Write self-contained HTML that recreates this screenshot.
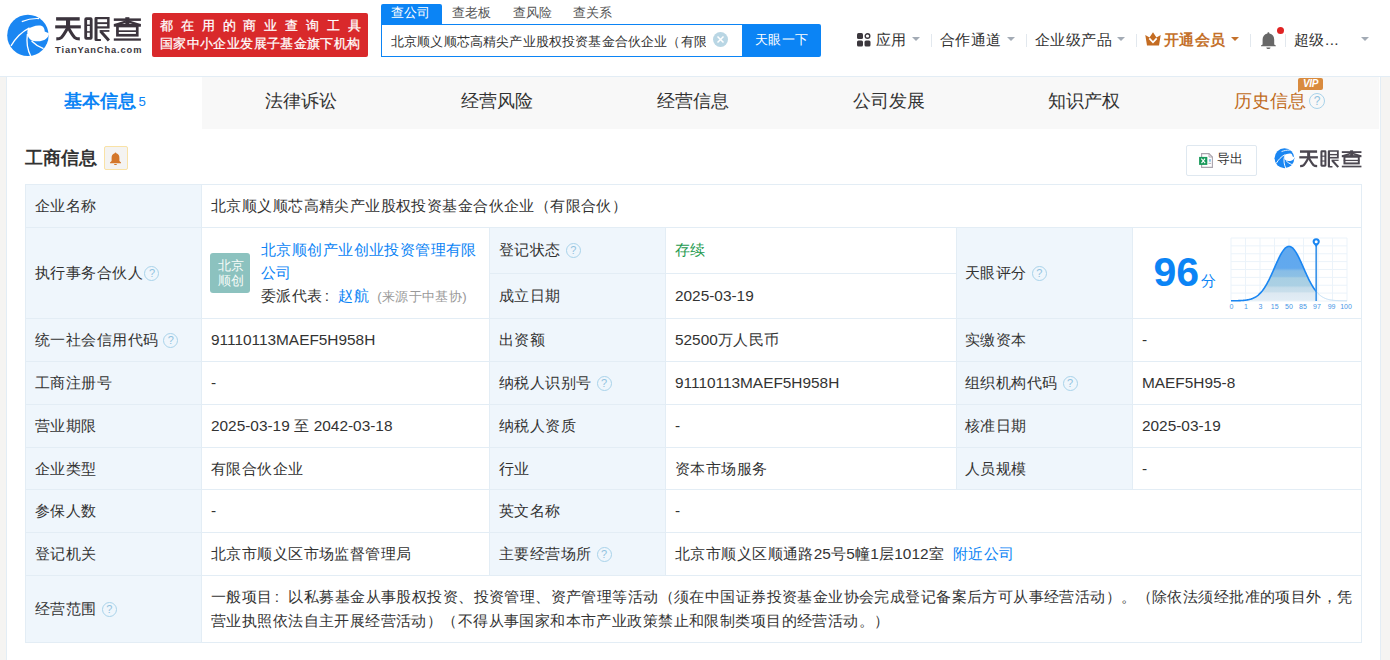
<!DOCTYPE html>
<html><head><meta charset="utf-8">
<style>
*{margin:0;padding:0;box-sizing:border-box}
html,body{width:1390px;height:660px;overflow:hidden}
body{position:relative;background:#f5f4f2;font-family:"Liberation Sans",sans-serif;color:#333}
.a{position:absolute;white-space:nowrap}
#hdr{position:absolute;left:0;top:0;width:1390px;height:76px;background:#fff}
#hline{position:absolute;left:0;top:76px;width:1390px;height:1px;background:#e3edf5}
#card{position:absolute;left:6px;top:76px;width:1375px;height:600px;background:#fff;border:1px solid #e3edf5}
#rstrip{position:absolute;left:1381px;top:77px;width:9px;height:600px;background:#f5f4f2}
.tabbg{position:absolute;top:77px;height:52px;background:#f8f8f8}
.tab{position:absolute;top:88px;font-size:17.6px;line-height:26px;color:#333;text-align:center}
.bd{position:absolute;background:#e3edf5}
.lbl{position:absolute;background:#eff6fc}
.t{position:absolute;font-size:15.4px;line-height:20px;white-space:nowrap;color:#333}
.q{display:inline-block;width:15px;height:15px;border:1px solid #a9d3ea;border-radius:50%;color:#92c3df;font-size:11px;line-height:13px;text-align:center;vertical-align:1px;margin-left:5px;font-family:"Liberation Sans",sans-serif}
.caret{position:absolute;width:0;height:0;border-left:4px solid transparent;border-right:4px solid transparent;border-top:4.5px solid #a3abb5}
.sep{position:absolute;top:34px;width:1px;height:13px;background:#e2e8ee}
.nav{position:absolute;top:30px;font-size:15.4px;line-height:20px;color:#333;white-space:nowrap;letter-spacing:0.45px}
</style><style>.c{letter-spacing:0.42px}</style></head><body>
<div id="hdr"></div>
<div id="hline"></div>
<div id="card"></div>
<div id="rstrip"></div>

<!-- logo -->
<svg class="a" style="left:4px;top:12px" width="48" height="48" viewBox="0 0 48 48">
<circle cx="23.9" cy="23.4" r="20.7" fill="#1a86f2"/>
<path d="M24 17.1 C27 15 33 12.5 38 14 C40 15 40.8 17.5 40.7 19.5 L44.8 21.3 L45 22 C44.2 26 41 28.5 36 29.2 C32 29.5 29 29 27.6 28.4 C25 27 23.3 24 23.3 21 C23.3 19.5 23.5 18 24 17.1Z" fill="#fff"/>
<path d="M17.8 9.6 C23 7.5 29 6.2 35 6.6" stroke="#fff" stroke-width="1.2" fill="none"/>
<path d="M7 33.8 C11 27 17 20 25.5 15.8" stroke="#fff" stroke-width="1.3" fill="none"/>
<path d="M23.4 22 C22.4 29 23 37 26.9 44.5" stroke="#fff" stroke-width="1.3" fill="none"/>
<path d="M27.6 29 C30 31.5 34 34.5 39.5 36.6" stroke="#fff" stroke-width="1.3" fill="none"/>
</svg>
<svg class="a" style="left:52px;top:14px" width="96.00" height="30.00" viewBox="0 0 96 30"><g fill="#3b343d">
<rect x="4.1" y="3.2" width="23.6" height="3.4"/>
<rect x="3.2" y="11.3" width="25.6" height="3.1"/>
<rect x="14" y="5" width="4.1" height="8"/>
<rect x="33.7" y="4.6" width="5.5" height="19.8" rx="0.6" fill="none" stroke="#3b343d" stroke-width="2.8"/>
<rect x="33" y="10.5" width="7" height="1.5"/>
<rect x="33" y="17.2" width="7" height="1.5"/>
<path d="M42.5 4.5Q42.5 3.1 44 3.1H57.6V14.6H45.5V24.6Q45.5 24.9 45.8 24.9H48.9V26.9H44Q42.5 26.9 42.5 25.4Z"/>
<rect x="45.5" y="5.2" width="9.6" height="3" fill="#fff"/>
<rect x="45.5" y="10.1" width="9.6" height="2.2" fill="#fff"/>
<rect x="47.6" y="16.1" width="9.8" height="1.7"/>
<rect x="61.8" y="4.4" width="27.1" height="2.5"/>
<rect x="73.3" y="3.2" width="4.1" height="8.5"/>
<rect x="61.8" y="9.9" width="27.1" height="2.8"/>
<rect x="65.45" y="12" width="19.8" height="9.25" fill="none" stroke="#3b343d" stroke-width="2.7"/>
<rect x="64.5" y="16.3" width="21.5" height="1.7"/>
<rect x="61.8" y="24.4" width="27.1" height="2.3"/>
</g>
<g fill="none" stroke="#3b343d" stroke-linejoin="round">
<path d="M15.9 13.5C14 17 11.5 21.5 9.3 23.6C8.3 24.5 7 24.9 4.3 24.9" stroke-width="3.1"/>
<path d="M16.2 13.5C18.1 17 20.6 21.5 22.8 23.6C23.8 24.5 25.1 24.9 27.8 24.9" stroke-width="3.1"/>
<path d="M48.6 17.2L56.9 26.4" stroke-width="3"/>
<path d="M73.8 7.6L62.6 11.2M76.9 7.6L88.1 11.2" stroke-width="2.4"/>
</g></svg>
<div class="a" style="left:55px;top:45px;font-size:9.3px;line-height:11px;font-weight:bold;color:#3b373d;letter-spacing:0.9px">TianYanCha.com</div>

<!-- red badge -->
<div class="a" style="left:152px;top:13px;width:216px;height:44px;background:#d9292b;border-radius:2px"></div>
<div class="a" style="left:160px;top:17px;font-size:13.4px;line-height:18px;color:#fff;letter-spacing:7.85px;-webkit-text-stroke:0.25px #fff">都在用的商业查询工具</div>
<div class="a" style="left:160px;top:35px;font-size:13.4px;line-height:18px;color:#fff;letter-spacing:0.36px;-webkit-text-stroke:0.25px #fff">国家中小企业发展子基金旗下机构</div>

<!-- search -->
<div class="a" style="left:381px;top:4px;width:61px;height:21px;background:#0b84f5;border-radius:2px 2px 0 0"></div>
<div class="a" style="left:391px;top:3px;font-size:13.2px;line-height:20px;color:#fff">查公司</div>
<div class="a" style="left:452px;top:3px;font-size:13.2px;line-height:20px;color:#555">查老板</div>
<div class="a" style="left:512.5px;top:3px;font-size:13.2px;line-height:20px;color:#555">查风险</div>
<div class="a" style="left:573px;top:3px;font-size:13.2px;line-height:20px;color:#555">查关系</div>
<div class="a" style="left:381px;top:24px;width:362px;height:33px;border:1px solid #0b84f5;border-right:none;background:#fff"></div>
<div class="a" style="left:391px;top:32px;width:315px;overflow:hidden;font-size:13.2px;line-height:20px;color:#333;letter-spacing:0.16px">北京顺义顺芯高精尖产业股权投资基金合伙企业（有限合伙）</div>
<div class="a" style="left:713px;top:32px;width:15px;height:15px;border-radius:50%;background:#b9d6e4"></div>
<svg class="a" style="left:713px;top:32px" width="15" height="15"><path d="M4.5 4.5L10.5 10.5M10.5 4.5L4.5 10.5" stroke="#fff" stroke-width="1.5"/></svg>
<div class="a" style="left:742px;top:24px;width:79px;height:33px;background:#0b84f5;border-radius:0 2px 2px 0"></div>
<div class="a" style="left:755px;top:30px;font-size:13.2px;line-height:20px;color:#fff;letter-spacing:0.4px">天眼一下</div>

<!-- nav -->
<svg class="a" style="left:857px;top:33px" width="14" height="14" viewBox="0 0 14 14">
<rect x="0" y="0" width="6" height="6" rx="1.5" fill="#3b373d"/><circle cx="10.5" cy="3" r="2.3" fill="none" stroke="#3b373d" stroke-width="1.4"/>
<rect x="0" y="7.5" width="6" height="6" rx="1.5" fill="#3b373d"/><rect x="7.5" y="7.5" width="6" height="6" rx="1.5" fill="#3b373d"/></svg>
<div class="nav" style="left:876px">应用</div>
<div class="caret" style="left:912px;top:37px"></div>
<div class="sep" style="left:931px"></div>
<div class="nav" style="left:940px">合作通道</div>
<div class="caret" style="left:1007px;top:37px"></div>
<div class="sep" style="left:1026px"></div>
<div class="nav" style="left:1035px">企业级产品</div>
<div class="caret" style="left:1117px;top:37px"></div>
<div class="sep" style="left:1136px"></div>
<svg class="a" style="left:1145px;top:31.5px" width="16" height="14" viewBox="0 0 16 14">
<path d="M0.3 3L4.5 5.5L8 0.3L11.5 5.5L15.7 3L14 13.5H2Z" fill="#c46c22"/><path d="M4.3 6.3L8 10.3L11.7 6.3" stroke="#fff" stroke-width="1.7" fill="none"/></svg>
<div class="nav" style="left:1164px;color:#c4712b;font-weight:bold">开通会员</div>
<div class="caret" style="left:1231px;top:37px;border-top-color:#c4712b"></div>
<div class="sep" style="left:1250px"></div>
<svg class="a" style="left:1261px;top:32px" width="16" height="18" viewBox="0 0 16 18"><path d="M7.4 0.3C8 0.3 8.4 0.8 8.4 1.4C11.6 2.1 13.2 4.6 13.2 7.6V12.4L14.8 13.4V14.2H0V13.4L1.6 12.4V7.6C1.6 4.6 3.2 2.1 6.4 1.4C6.4 0.8 6.8 0.3 7.4 0.3Z" fill="#676767"/><path d="M5.3 15.4H9.5C9.3 16.4 8.5 16.9 7.4 16.9C6.3 16.9 5.5 16.4 5.3 15.4Z" fill="#676767"/></svg>
<div class="a" style="left:1276.5px;top:27px;width:7px;height:7px;border-radius:50%;background:#e02323"></div>
<div class="sep" style="left:1285px"></div>
<div class="nav" style="left:1294px">超级...</div>
<div class="caret" style="left:1361px;top:37px"></div>


<!-- tabs -->
<div class="tabbg" style="left:202px;width:1177px"></div>
<div class="tab" style="left:64px;color:#0b84f5;font-weight:bold">基本信息<span style="font-size:13.2px;font-weight:normal;margin-left:2.5px;vertical-align:1.5px">5</span></div>
<div class="tab" style="left:265px">法律诉讼</div>
<div class="tab" style="left:461px">经营风险</div>
<div class="tab" style="left:657px">经营信息</div>
<div class="tab" style="left:853px">公司发展</div>
<div class="tab" style="left:1048px">知识产权</div>
<div class="tab" style="left:1234px;color:#c06b22">历史信息<span class="q" style="width:16px;height:16px;font-size:12px;line-height:14px;margin-left:3px;vertical-align:2px">?</span></div>
<div class="a" style="left:1298px;top:78px;width:25px;height:12px;background:#d98b3e;border-radius:2px 2px 2px 0;color:#fff;font-size:10px;line-height:12px;font-weight:bold;font-style:italic;text-align:center;letter-spacing:-0.3px">VIP</div><svg class="a" style="left:1298px;top:89px" width="5" height="4"><path d="M0 0H5L0 3.5Z" fill="#d98b3e"/></svg>

<!-- section title -->
<div class="a" style="left:25px;top:145px;font-size:17.6px;line-height:26px;font-weight:bold;color:#333">工商信息</div>
<div class="a" style="left:104px;top:146px;width:24px;height:24px;background:#f4f3f1;border:1px solid #f9e2a6;border-radius:2px"></div>
<svg class="a" style="left:109px;top:152px" width="13" height="13" viewBox="0 0 13 13"><path d="M6.5 0.5C7 0.5 7.3 0.9 7.3 1.3C9.6 1.9 10.4 3.8 10.4 6V9L12 10.6V11.3H1V10.6L2.6 9V6C2.6 3.8 3.4 1.9 5.7 1.3C5.7 0.9 6 0.5 6.5 0.5ZM5 12H8C8 12.6 7.3 13 6.5 13C5.7 13 5 12.6 5 12Z" fill="#d4772a"/></svg>

<!-- export -->
<div class="a" style="left:1186px;top:145px;width:71px;height:31px;border:1px solid #dfe8f0;border-radius:2px;background:#fff"></div>
<svg class="a" style="left:1198px;top:153px" width="16" height="16" viewBox="0 0 16 16"><path d="M3.6 0.6H11L14.4 4V14.4H3.6Z" fill="#fff" stroke="#a9a3ad" stroke-width="1.1"/><path d="M11 0.6V4H14.4" fill="none" stroke="#a9a3ad" stroke-width="0.9"/><rect x="1.1" y="3.9" width="8.2" height="8" fill="#18995a"/><path d="M3.3 5.6L7.2 10.2M7 5.6L3.5 10.2" stroke="#fff" stroke-width="1.1"/><rect x="10.9" y="6.1" width="2" height="2.6" fill="#8cc3e3"/><rect x="10.5" y="9.9" width="2.6" height="0.9" fill="#a9a3ad"/></svg>
<div class="a" style="left:1217px;top:149px;font-size:13.2px;line-height:20px;color:#333">导出</div>
<svg class="a" style="left:1272.5px;top:146.5px" width="23" height="23" viewBox="0 0 48 48">
<circle cx="23.9" cy="23.4" r="20.7" fill="#1a86f2"/>
<path d="M24 17.1 C27 15 33 12.5 38 14 C40 15 40.8 17.5 40.7 19.5 L44.8 21.3 L45 22 C44.2 26 41 28.5 36 29.2 C32 29.5 29 29 27.6 28.4 C25 27 23.3 24 23.3 21 C23.3 19.5 23.5 18 24 17.1Z" fill="#fff"/>
<path d="M17.8 9.6 C23 7.5 29 6.2 35 6.6" stroke="#fff" stroke-width="1.8" fill="none"/>
<path d="M7 33.8 C11 27 17 20 25.5 15.8" stroke="#fff" stroke-width="2" fill="none"/>
<path d="M23.4 22 C22.4 29 23 37 26.9 44.5" stroke="#fff" stroke-width="2" fill="none"/>
<path d="M27.6 29 C30 31.5 34 34.5 39.5 36.6" stroke="#fff" stroke-width="2" fill="none"/>
</svg>
<svg class="a" style="left:1296.8px;top:147.7px" width="69.60" height="21.75" viewBox="0 0 96 30"><g fill="#4b4750">
<rect x="4.1" y="3.2" width="23.6" height="3.4"/>
<rect x="3.2" y="11.3" width="25.6" height="3.1"/>
<rect x="14" y="5" width="4.1" height="8"/>
<rect x="33.7" y="4.6" width="5.5" height="19.8" rx="0.6" fill="none" stroke="#4b4750" stroke-width="2.8"/>
<rect x="33" y="10.5" width="7" height="1.5"/>
<rect x="33" y="17.2" width="7" height="1.5"/>
<path d="M42.5 4.5Q42.5 3.1 44 3.1H57.6V14.6H45.5V24.6Q45.5 24.9 45.8 24.9H48.9V26.9H44Q42.5 26.9 42.5 25.4Z"/>
<rect x="45.5" y="5.2" width="9.6" height="3" fill="#fff"/>
<rect x="45.5" y="10.1" width="9.6" height="2.2" fill="#fff"/>
<rect x="47.6" y="16.1" width="9.8" height="1.7"/>
<rect x="61.8" y="4.4" width="27.1" height="2.5"/>
<rect x="73.3" y="3.2" width="4.1" height="8.5"/>
<rect x="61.8" y="9.9" width="27.1" height="2.8"/>
<rect x="65.45" y="12" width="19.8" height="9.25" fill="none" stroke="#4b4750" stroke-width="2.7"/>
<rect x="64.5" y="16.3" width="21.5" height="1.7"/>
<rect x="61.8" y="24.4" width="27.1" height="2.3"/>
</g>
<g fill="none" stroke="#4b4750" stroke-linejoin="round">
<path d="M15.9 13.5C14 17 11.5 21.5 9.3 23.6C8.3 24.5 7 24.9 4.3 24.9" stroke-width="3.1"/>
<path d="M16.2 13.5C18.1 17 20.6 21.5 22.8 23.6C23.8 24.5 25.1 24.9 27.8 24.9" stroke-width="3.1"/>
<path d="M48.6 17.2L56.9 26.4" stroke-width="3"/>
<path d="M73.8 7.6L62.6 11.2M76.9 7.6L88.1 11.2" stroke-width="2.4"/>
</g></svg>

<!-- table -->
<div class="lbl" style="left:25px;top:184px;width:176px;height:43px"></div>
<div class="lbl" style="left:25px;top:227px;width:176px;height:91px"></div>
<div class="lbl" style="left:489px;top:227px;width:176px;height:91px"></div>
<div class="lbl" style="left:956px;top:227px;width:176px;height:91px"></div>
<div class="lbl" style="left:25px;top:318px;width:176px;height:43px"></div>
<div class="lbl" style="left:489px;top:318px;width:176px;height:43px"></div>
<div class="lbl" style="left:956px;top:318px;width:176px;height:43px"></div>
<div class="lbl" style="left:25px;top:361px;width:176px;height:43px"></div>
<div class="lbl" style="left:489px;top:361px;width:176px;height:43px"></div>
<div class="lbl" style="left:956px;top:361px;width:176px;height:43px"></div>
<div class="lbl" style="left:25px;top:404px;width:176px;height:43px"></div>
<div class="lbl" style="left:489px;top:404px;width:176px;height:43px"></div>
<div class="lbl" style="left:956px;top:404px;width:176px;height:43px"></div>
<div class="lbl" style="left:25px;top:447px;width:176px;height:42px"></div>
<div class="lbl" style="left:489px;top:447px;width:176px;height:42px"></div>
<div class="lbl" style="left:956px;top:447px;width:176px;height:42px"></div>
<div class="lbl" style="left:25px;top:489px;width:176px;height:43px"></div>
<div class="lbl" style="left:489px;top:489px;width:176px;height:43px"></div>
<div class="lbl" style="left:25px;top:532px;width:176px;height:43px"></div>
<div class="lbl" style="left:489px;top:532px;width:176px;height:43px"></div>
<div class="lbl" style="left:25px;top:575px;width:176px;height:67px"></div>
<div class="bd" style="left:25px;top:184px;width:1337px;height:1px"></div>
<div class="bd" style="left:25px;top:227px;width:1337px;height:1px"></div>
<div class="bd" style="left:25px;top:318px;width:1337px;height:1px"></div>
<div class="bd" style="left:25px;top:361px;width:1337px;height:1px"></div>
<div class="bd" style="left:25px;top:404px;width:1337px;height:1px"></div>
<div class="bd" style="left:25px;top:447px;width:1337px;height:1px"></div>
<div class="bd" style="left:25px;top:489px;width:1337px;height:1px"></div>
<div class="bd" style="left:25px;top:532px;width:1337px;height:1px"></div>
<div class="bd" style="left:25px;top:575px;width:1337px;height:1px"></div>
<div class="bd" style="left:25px;top:642px;width:1337px;height:1px"></div>
<div class="bd" style="left:489px;top:273px;width:468px;height:1px"></div>
<div class="bd" style="left:25px;top:184px;width:1px;height:459px"></div>
<div class="bd" style="left:1361px;top:184px;width:1px;height:459px"></div>
<div class="bd" style="left:201px;top:184px;width:1px;height:459px"></div>
<div class="bd" style="left:489px;top:227px;width:1px;height:349px"></div>
<div class="bd" style="left:665px;top:227px;width:1px;height:349px"></div>
<div class="bd" style="left:956px;top:227px;width:1px;height:263px"></div>
<div class="bd" style="left:1132px;top:227px;width:1px;height:263px"></div>
<div class="t" style="left:35px;top:196.0px;"><span class="c">企业名称</span></div>
<div class="t" style="left:211px;top:196.0px;"><span class="c">北京顺义顺芯高精尖产业股权投资基金合伙企业（有限合伙）</span></div>
<div class="t" style="left:35px;top:263.0px;"><span class="c">执行事务合伙人</span><span class="q" style="margin-left:1.5px">?</span></div>
<div class="t" style="left:499px;top:240.0px;"><span class="c">登记状态</span><span class="q">?</span></div>
<div class="t" style="left:675px;top:240.0px;color:#1e9a4e"><span class="c">存续</span></div>
<div class="t" style="left:499px;top:286.0px;"><span class="c">成立日期</span></div>
<div class="t" style="left:675px;top:286.0px;">2025-03-19</div>
<div class="t" style="left:965px;top:263.0px;"><span class="c">天眼评分</span><span class="q">?</span></div>
<div class="t" style="left:35px;top:330.0px;"><span class="c">统一社会信用代码</span><span class="q">?</span></div>
<div class="t" style="left:211px;top:330.0px;">91110113MAEF5H958H</div>
<div class="t" style="left:499px;top:330.0px;"><span class="c">出资额</span></div>
<div class="t" style="left:675px;top:330.0px;">52500<span class="c">万人民币</span></div>
<div class="t" style="left:965px;top:330.0px;"><span class="c">实缴资本</span></div>
<div class="t" style="left:1142px;top:330.0px;">-</div>
<div class="t" style="left:35px;top:373.0px;"><span class="c">工商注册号</span></div>
<div class="t" style="left:211px;top:373.0px;">-</div>
<div class="t" style="left:499px;top:373.0px;"><span class="c">纳税人识别号</span><span class="q">?</span></div>
<div class="t" style="left:675px;top:373.0px;">91110113MAEF5H958H</div>
<div class="t" style="left:965px;top:373.0px;"><span class="c">组织机构代码</span><span class="q">?</span></div>
<div class="t" style="left:1142px;top:373.0px;">MAEF5H95-8</div>
<div class="t" style="left:35px;top:416.0px;"><span class="c">营业期限</span></div>
<div class="t" style="left:211px;top:416.0px;">2025-03-19 <span class="c">至</span> 2042-03-18</div>
<div class="t" style="left:499px;top:416.0px;"><span class="c">纳税人资质</span></div>
<div class="t" style="left:675px;top:416.0px;">-</div>
<div class="t" style="left:965px;top:416.0px;"><span class="c">核准日期</span></div>
<div class="t" style="left:1142px;top:416.0px;">2025-03-19</div>
<div class="t" style="left:35px;top:458.5px;"><span class="c">企业类型</span></div>
<div class="t" style="left:211px;top:458.5px;"><span class="c">有限合伙企业</span></div>
<div class="t" style="left:499px;top:458.5px;"><span class="c">行业</span></div>
<div class="t" style="left:675px;top:458.5px;"><span class="c">资本市场服务</span></div>
<div class="t" style="left:965px;top:458.5px;"><span class="c">人员规模</span></div>
<div class="t" style="left:1142px;top:458.5px;">-</div>
<div class="t" style="left:35px;top:501.0px;"><span class="c">参保人数</span></div>
<div class="t" style="left:211px;top:501.0px;">-</div>
<div class="t" style="left:499px;top:501.0px;"><span class="c">英文名称</span></div>
<div class="t" style="left:675px;top:501.0px;">-</div>
<div class="t" style="left:35px;top:544.0px;"><span class="c">登记机关</span></div>
<div class="t" style="left:211px;top:544.0px;"><span class="c">北京市顺义区市场监督管理局</span></div>
<div class="t" style="left:499px;top:544.0px;"><span class="c">主要经营场所</span><span class="q">?</span></div>
<div class="t" style="left:675px;top:544.0px;"><span class="c">北京市顺义区顺通路</span>25<span class="c">号</span>5<span class="c">幢</span>1<span class="c">层</span>1012<span class="c">室</span><span style="color:#0b84f5;margin-left:9px"><span class="c">附近公司</span></span></div>
<div class="t" style="left:35px;top:598.5px;"><span class="c">经营范围</span><span class="q">?</span></div>
<div class="t" style="left:211px;top:584.5px;line-height:24px"><span class="c">一般项目</span><span style="display:inline-block;width:15.8px;padding-left:2px;box-sizing:border-box">:</span><span class="c">以私募基金从事股权投资、投资管理、资产管理等活动（须在中国证券投资基金业协会完成登记备案后方可从事经营活动）。（除依法须经批准的项目外，凭</span><br><span class="c">营业执照依法自主开展经营活动）（不得从事国家和本市产业政策禁止和限制类项目的经营活动。）</span></div>
<div class="a" style="left:210px;top:253px;width:40px;height:40px;border-radius:3px;background:#8cc2bf"></div>
<div class="a" style="left:210.5px;top:258px;width:40px;font-size:13px;line-height:15px;color:#f6fbf8;text-align:center;white-space:normal">北京<br>顺创</div>
<div class="t" style="left:261px;top:238.0px;line-height:23px;color:#0b84f5"><span class="c">北京顺创产业创业投资管理有限</span><br><span class="c">公司</span></div>
<div class="t" style="left:261px;top:286.0px;"><span class="c">委派代表</span><span style="display:inline-block;width:15.8px;padding-left:2px;box-sizing:border-box">:</span><span style="color:#0b84f5"><span class="c">赵航</span></span><span style="color:#999;font-size:13.2px;margin-left:8px">(<span class="c">来源于中基协</span>)</span></div>
<div class="a" style="left:1153.5px;top:250px;font-size:41px;line-height:44px;font-weight:bold;color:#0b84f5">96</div>
<div class="a" style="left:1200.5px;top:270.5px;font-size:15.4px;line-height:20px;color:#0b84f5">分</div>
<!-- chart -->
<svg class="a" style="left:1228px;top:232px" width="125" height="82" viewBox="0 0 125 82">
<defs><linearGradient id="g" x1="0" y1="0" x2="0" y2="1"><stop offset="0" stop-color="#60a8ee"/><stop offset="0.40" stop-color="#62a9ee"/><stop offset="0.45" stop-color="#88bde6"/><stop offset="0.55" stop-color="#8cc0e5"/><stop offset="0.58" stop-color="#a9cfe3"/><stop offset="0.72" stop-color="#abd0e4"/><stop offset="0.76" stop-color="#c5dcea"/><stop offset="0.83" stop-color="#c8deeb"/><stop offset="0.86" stop-color="#dde9f2"/><stop offset="1" stop-color="#e2edf5"/></linearGradient></defs>
<line x1="3.00" y1="6" x2="3.00" y2="69" stroke="#ebf3fa" stroke-width="1"/>
<line x1="3" y1="6.00" x2="119" y2="6.00" stroke="#ebf3fa" stroke-width="1"/>
<line x1="17.50" y1="6" x2="17.50" y2="69" stroke="#ebf3fa" stroke-width="1"/>
<line x1="3" y1="13.88" x2="119" y2="13.88" stroke="#ebf3fa" stroke-width="1"/>
<line x1="32.00" y1="6" x2="32.00" y2="69" stroke="#ebf3fa" stroke-width="1"/>
<line x1="3" y1="21.75" x2="119" y2="21.75" stroke="#ebf3fa" stroke-width="1"/>
<line x1="46.50" y1="6" x2="46.50" y2="69" stroke="#ebf3fa" stroke-width="1"/>
<line x1="3" y1="29.62" x2="119" y2="29.62" stroke="#ebf3fa" stroke-width="1"/>
<line x1="61.00" y1="6" x2="61.00" y2="69" stroke="#ebf3fa" stroke-width="1"/>
<line x1="3" y1="37.50" x2="119" y2="37.50" stroke="#ebf3fa" stroke-width="1"/>
<line x1="75.50" y1="6" x2="75.50" y2="69" stroke="#ebf3fa" stroke-width="1"/>
<line x1="3" y1="45.38" x2="119" y2="45.38" stroke="#ebf3fa" stroke-width="1"/>
<line x1="90.00" y1="6" x2="90.00" y2="69" stroke="#ebf3fa" stroke-width="1"/>
<line x1="3" y1="53.25" x2="119" y2="53.25" stroke="#ebf3fa" stroke-width="1"/>
<line x1="104.50" y1="6" x2="104.50" y2="69" stroke="#ebf3fa" stroke-width="1"/>
<line x1="3" y1="61.12" x2="119" y2="61.12" stroke="#ebf3fa" stroke-width="1"/>
<line x1="119.00" y1="6" x2="119.00" y2="69" stroke="#ebf3fa" stroke-width="1"/>
<line x1="3" y1="69.00" x2="119" y2="69.00" stroke="#ebf3fa" stroke-width="1"/>
<path d="M3.00 68.78 L3.50 68.78 L4.00 68.78 L4.50 68.77 L5.00 68.77 L5.50 68.76 L6.00 68.76 L6.50 68.75 L7.00 68.75 L7.50 68.74 L8.00 68.73 L8.50 68.72 L9.00 68.71 L9.50 68.70 L10.00 68.69 L10.50 68.67 L11.00 68.66 L11.50 68.64 L12.00 68.62 L12.50 68.60 L13.00 68.57 L13.50 68.55 L14.00 68.52 L14.50 68.48 L15.00 68.45 L15.50 68.40 L16.00 68.36 L16.50 68.31 L17.00 68.26 L17.50 68.20 L18.00 68.13 L18.50 68.06 L19.00 67.98 L19.50 67.89 L20.00 67.80 L20.50 67.70 L21.00 67.59 L21.50 67.47 L22.00 67.34 L22.50 67.20 L23.00 67.05 L23.50 66.88 L24.00 66.70 L24.50 66.51 L25.00 66.30 L25.50 66.08 L26.00 65.85 L26.50 65.59 L27.00 65.32 L27.50 65.03 L28.00 64.72 L28.50 64.39 L29.00 64.04 L29.50 63.66 L30.00 63.27 L30.50 62.85 L31.00 62.40 L31.50 61.93 L32.00 61.44 L32.50 60.92 L33.00 60.37 L33.50 59.79 L34.00 59.19 L34.50 58.56 L35.00 57.90 L35.50 57.21 L36.00 56.49 L36.50 55.75 L37.00 54.97 L37.50 54.17 L38.00 53.34 L38.50 52.48 L39.00 51.59 L39.50 50.68 L40.00 49.74 L40.50 48.78 L41.00 47.79 L41.50 46.78 L42.00 45.75 L42.50 44.69 L43.00 43.62 L43.50 42.54 L44.00 41.44 L44.50 40.33 L45.00 39.21 L45.50 38.08 L46.00 36.94 L46.50 35.80 L47.00 34.67 L47.50 33.53 L48.00 32.40 L48.50 31.28 L49.00 30.17 L49.50 29.08 L50.00 28.00 L50.50 26.95 L51.00 25.91 L51.50 24.91 L52.00 23.93 L52.50 22.99 L53.00 22.08 L53.50 21.21 L54.00 20.38 L54.50 19.60 L55.00 18.86 L55.50 18.18 L56.00 17.54 L56.50 16.96 L57.00 16.43 L57.50 15.96 L58.00 15.55 L58.50 15.20 L59.00 14.92 L59.50 14.69 L60.00 14.53 L60.50 14.43 L61.00 14.40 L61.50 14.43 L62.00 14.53 L62.50 14.69 L63.00 14.92 L63.50 15.20 L64.00 15.55 L64.50 15.96 L65.00 16.43 L65.50 16.96 L66.00 17.54 L66.50 18.18 L67.00 18.86 L67.50 19.60 L68.00 20.38 L68.50 21.21 L69.00 22.08 L69.50 22.99 L70.00 23.93 L70.50 24.91 L71.00 25.91 L71.50 26.95 L72.00 28.00 L72.50 29.08 L73.00 30.17 L73.50 31.28 L74.00 32.40 L74.50 33.53 L75.00 34.67 L75.50 35.80 L76.00 36.94 L76.50 38.08 L77.00 39.21 L77.50 40.33 L78.00 41.44 L78.50 42.54 L79.00 43.62 L79.50 44.69 L80.00 45.75 L80.50 46.78 L81.00 47.79 L81.50 48.78 L82.00 49.74 L82.50 50.68 L83.00 51.59 L83.50 52.48 L84.00 53.34 L84.50 54.17 L85.00 54.97 L85.50 55.75 L86.00 56.49 L86.50 57.21 L87.00 57.90 L87.50 58.56 L88.00 59.19 L88.20 59.44 L88.20 68.80000000000001 L3 68.80000000000001 Z" fill="url(#g)"/>
<path d="M3.00 68.78 L3.50 68.78 L4.00 68.78 L4.50 68.77 L5.00 68.77 L5.50 68.76 L6.00 68.76 L6.50 68.75 L7.00 68.75 L7.50 68.74 L8.00 68.73 L8.50 68.72 L9.00 68.71 L9.50 68.70 L10.00 68.69 L10.50 68.67 L11.00 68.66 L11.50 68.64 L12.00 68.62 L12.50 68.60 L13.00 68.57 L13.50 68.55 L14.00 68.52 L14.50 68.48 L15.00 68.45 L15.50 68.40 L16.00 68.36 L16.50 68.31 L17.00 68.26 L17.50 68.20 L18.00 68.13 L18.50 68.06 L19.00 67.98 L19.50 67.89 L20.00 67.80 L20.50 67.70 L21.00 67.59 L21.50 67.47 L22.00 67.34 L22.50 67.20 L23.00 67.05 L23.50 66.88 L24.00 66.70 L24.50 66.51 L25.00 66.30 L25.50 66.08 L26.00 65.85 L26.50 65.59 L27.00 65.32 L27.50 65.03 L28.00 64.72 L28.50 64.39 L29.00 64.04 L29.50 63.66 L30.00 63.27 L30.50 62.85 L31.00 62.40 L31.50 61.93 L32.00 61.44 L32.50 60.92 L33.00 60.37 L33.50 59.79 L34.00 59.19 L34.50 58.56 L35.00 57.90 L35.50 57.21 L36.00 56.49 L36.50 55.75 L37.00 54.97 L37.50 54.17 L38.00 53.34 L38.50 52.48 L39.00 51.59 L39.50 50.68 L40.00 49.74 L40.50 48.78 L41.00 47.79 L41.50 46.78 L42.00 45.75 L42.50 44.69 L43.00 43.62 L43.50 42.54 L44.00 41.44 L44.50 40.33 L45.00 39.21 L45.50 38.08 L46.00 36.94 L46.50 35.80 L47.00 34.67 L47.50 33.53 L48.00 32.40 L48.50 31.28 L49.00 30.17 L49.50 29.08 L50.00 28.00 L50.50 26.95 L51.00 25.91 L51.50 24.91 L52.00 23.93 L52.50 22.99 L53.00 22.08 L53.50 21.21 L54.00 20.38 L54.50 19.60 L55.00 18.86 L55.50 18.18 L56.00 17.54 L56.50 16.96 L57.00 16.43 L57.50 15.96 L58.00 15.55 L58.50 15.20 L59.00 14.92 L59.50 14.69 L60.00 14.53 L60.50 14.43 L61.00 14.40 L61.50 14.43 L62.00 14.53 L62.50 14.69 L63.00 14.92 L63.50 15.20 L64.00 15.55 L64.50 15.96 L65.00 16.43 L65.50 16.96 L66.00 17.54 L66.50 18.18 L67.00 18.86 L67.50 19.60 L68.00 20.38 L68.50 21.21 L69.00 22.08 L69.50 22.99 L70.00 23.93 L70.50 24.91 L71.00 25.91 L71.50 26.95 L72.00 28.00 L72.50 29.08 L73.00 30.17 L73.50 31.28 L74.00 32.40 L74.50 33.53 L75.00 34.67 L75.50 35.80 L76.00 36.94 L76.50 38.08 L77.00 39.21 L77.50 40.33 L78.00 41.44 L78.50 42.54 L79.00 43.62 L79.50 44.69 L80.00 45.75 L80.50 46.78 L81.00 47.79 L81.50 48.78 L82.00 49.74 L82.50 50.68 L83.00 51.59 L83.50 52.48 L84.00 53.34 L84.50 54.17 L85.00 54.97 L85.50 55.75 L86.00 56.49 L86.50 57.21 L87.00 57.90 L87.50 58.56 L88.00 59.19 L88.20 59.44" fill="none" stroke="#1a86f2" stroke-width="1.6"/>
<path d="M88.50 59.79 L89.00 60.37 L89.50 60.92 L90.00 61.44 L90.50 61.93 L91.00 62.40 L91.50 62.85 L92.00 63.27 L92.50 63.66 L93.00 64.04 L93.50 64.39 L94.00 64.72 L94.50 65.03 L95.00 65.32 L95.50 65.59 L96.00 65.85 L96.50 66.08 L97.00 66.30 L97.50 66.51 L98.00 66.70 L98.50 66.88 L99.00 67.05 L99.50 67.20 L100.00 67.34 L100.50 67.47 L101.00 67.59 L101.50 67.70 L102.00 67.80 L102.50 67.89 L103.00 67.98 L103.50 68.06 L104.00 68.13 L104.50 68.20 L105.00 68.26 L105.50 68.31 L106.00 68.36 L106.50 68.40 L107.00 68.45 L107.50 68.48 L108.00 68.52 L108.50 68.55 L109.00 68.57 L109.50 68.60 L110.00 68.62 L110.50 68.64 L111.00 68.66 L111.50 68.67 L112.00 68.69 L112.50 68.70 L113.00 68.71 L113.50 68.72 L114.00 68.73 L114.50 68.74 L115.00 68.75 L115.50 68.75 L116.00 68.76 L116.50 68.76 L117.00 68.77 L117.50 68.77 L118.00 68.78 L118.50 68.78 L119.00 68.78" fill="none" stroke="#b9d8f2" stroke-width="0.9"/>
<line x1="88.20000000000005" y1="12" x2="88.20000000000005" y2="69" stroke="#3d95ea" stroke-width="1.7"/>
<path d="M84.60 9.80 A3.6 3.6 0 1 1 91.80 9.80 C91.80 11.80 89.20 13.30 88.20 15.30 C87.20 13.30 84.60 11.80 84.60 9.80Z" fill="#1a86f2"/>
<circle cx="88.20000000000005" cy="9.80" r="1.5" fill="#fff"/>
<text x="3.5" y="77.3" font-size="7" fill="#4896e6" text-anchor="middle" font-family="Liberation Sans">0</text>
<text x="18.0" y="77.3" font-size="7" fill="#4896e6" text-anchor="middle" font-family="Liberation Sans">1</text>
<text x="32.5" y="77.3" font-size="7" fill="#4896e6" text-anchor="middle" font-family="Liberation Sans">3</text>
<text x="46.7" y="77.3" font-size="7" fill="#4896e6" text-anchor="middle" font-family="Liberation Sans">15</text>
<text x="60.9" y="77.3" font-size="7" fill="#4896e6" text-anchor="middle" font-family="Liberation Sans">50</text>
<text x="75.0" y="77.3" font-size="7" fill="#4896e6" text-anchor="middle" font-family="Liberation Sans">85</text>
<text x="89.0" y="77.3" font-size="7" fill="#4896e6" text-anchor="middle" font-family="Liberation Sans">97</text>
<text x="103.6" y="77.3" font-size="7" fill="#4896e6" text-anchor="middle" font-family="Liberation Sans">99</text>
<text x="118.0" y="77.3" font-size="7" fill="#4896e6" text-anchor="middle" font-family="Liberation Sans">100</text>
</svg>
</body></html>
